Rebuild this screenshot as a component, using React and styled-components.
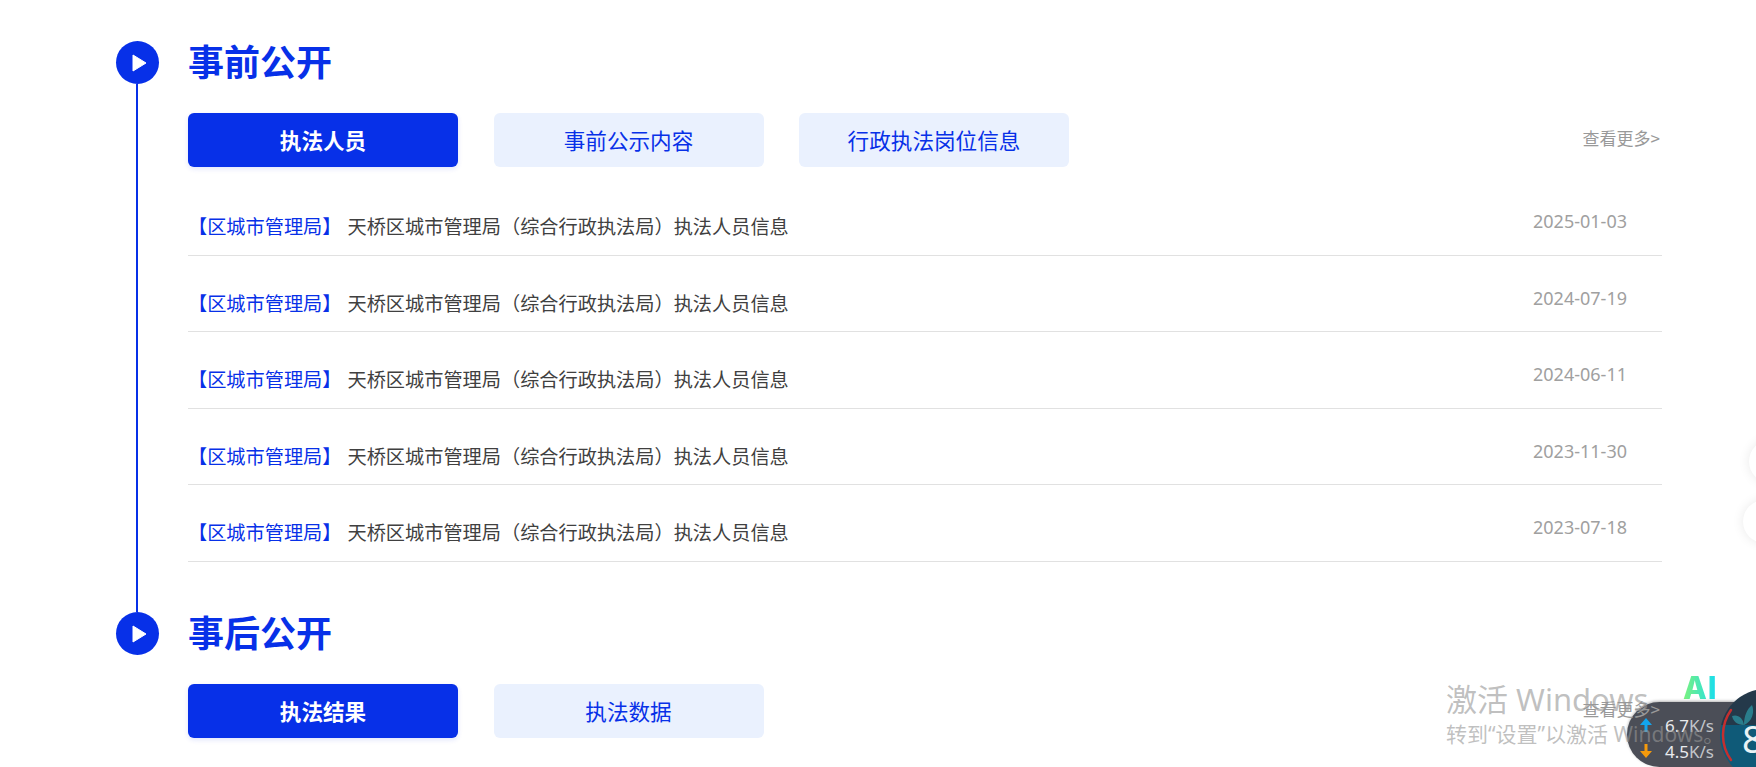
import React from 'react'
import styled, { createGlobalStyle } from 'styled-components'

const BLUE = '#0730e8'

const GlobalStyle = createGlobalStyle`
  html, body {
    margin: 0;
    padding: 0;
    height: 767px;
    overflow: hidden;
    background: #fff;
    font-family: "Noto Sans CJK SC", "Noto Sans", sans-serif;
  }
`

const Page = styled.div`
  position: relative;
  height: 767px;
  box-sizing: border-box;
  overflow: hidden;
  padding: 41px 94px 0 116px;
`

const Section = styled.section`
  display: flex;
  gap: 29px;
  height: 571px;
  &:last-of-type {
    height: auto;
  }
  &:last-of-type .rail-line {
    display: none;
  }
`

const Rail = styled.div`
  flex: 0 0 43px;
  display: flex;
  flex-direction: column;
`

const Dot = styled.div`
  width: 43px;
  height: 43px;
  flex: none;
  border-radius: 50%;
  background: ${BLUE};
  display: flex;
  align-items: center;
  justify-content: center;
  svg {
    margin-left: 3px;
  }
`

const RailLine = styled.div`
  flex: 1;
  width: 2px;
  margin-left: 20px;
  background: ${BLUE};
`

const Body = styled.div`
  flex: 1;
  min-width: 0;
`

const Title = styled.h2`
  margin: 0;
  height: 43px;
  line-height: 38px;
  font-size: 36px;
  font-weight: 700;
  color: ${BLUE};
`

const TabBar = styled.div`
  display: flex;
  align-items: center;
  gap: 35.5px;
  margin-top: 29px;
`

const Tab = styled.div`
  width: 270px;
  height: 54px;
  line-height: 54px;
  text-align: center;
  border-radius: 6px;
  font-size: 21.6px;
  font-weight: ${p => (p.$active ? 700 : 400)};
  color: ${p => (p.$active ? '#fff' : BLUE)};
  background: ${p => (p.$active ? BLUE : '#eaf1fe')};
  box-shadow: ${p => (p.$active ? '0 2px 5px rgba(7, 48, 232, 0.12)' : 'none')};
`

const More = styled.div`
  position: relative;
  z-index: 2;
  margin-left: auto;
  margin-right: 2px;
  margin-top: -6px;
  font-size: 17px;
  color: #999;
`

const List = styled.div`
  margin-top: 12.3px;
`

const Row = styled.div`
  height: 76.5px;
  box-sizing: border-box;
  display: flex;
  align-items: flex-end;
  padding: 0 35px 14.6px 0;
  border-bottom: 1px solid #e1e1e1;
`

const RowText = styled.div`
  flex: 1;
  line-height: 28px;
  font-size: 19.2px;
  color: #404040;
`

const Tag = styled.span`
  color: ${BLUE};
  margin-right: 6px;
`

const RowDate = styled.div`
  line-height: 28px;
  margin-bottom: 5px;
  font-family: "Noto Sans", sans-serif;
  font-size: 18px;
  color: #a0a0a0;
`

const SideButton = styled.div`
  position: absolute;
  top: ${p => p.$top}px;
  left: ${p => p.$left}px;
  width: 43px;
  height: 43px;
  border-radius: 50%;
  background: #fff;
  box-shadow: 0 0 12px rgba(0, 0, 0, 0.09);
`

const Watermark = styled.div`
  position: absolute;
  z-index: 3;
  left: 1446px;
  top: 679px;
  color: rgba(150, 150, 150, 0.6);
  white-space: nowrap;
  font-family: "Noto Sans", "Noto Sans CJK SC", sans-serif;
`

const WatermarkTitle = styled.div`
  font-size: 31px;
  line-height: 40px;
`

const WatermarkHint = styled.div`
  font-size: 21px;
  line-height: 30px;
`

const AiBadge = styled.div`
  position: absolute;
  left: 1683px;
  top: 668px;
  font-family: Inter, "Liberation Sans", sans-serif;
  font-size: 31px;
  font-weight: 800;
  line-height: 40px;
  letter-spacing: 1px;
  background: linear-gradient(90deg, #7cf27c, #12dcf5);
  -webkit-background-clip: text;
  background-clip: text;
  color: transparent;
`

const SpeedPill = styled.div`
  position: absolute;
  left: 1627px;
  top: 702px;
  width: 129px;
  height: 65px;
  padding-top: 10px;
  box-sizing: border-box;
  border-radius: 33px 0 0 33px;
  background: #4b4e57;
  box-shadow: 0 -1px 3px rgba(0, 0, 0, 0.3);
`

const SpeedRow = styled.div`
  display: flex;
  align-items: center;
  gap: 13px;
  height: 26px;
  padding-left: 13px;
  font-family: "Noto Sans", sans-serif;
  font-size: 17px;
  color: #e8eaed;
  span {
    color: #c2c5ca;
  }
`

const Ball = styled.div`
  position: absolute;
  left: 1720px;
  top: 689px;
  width: 92px;
  height: 92px;
  border-radius: 50%;
  overflow: hidden;
  background: linear-gradient(#24394a 0, #24394a 39%, #0f5a78 39%, #0f5a78 100%);
  svg {
    position: absolute;
    left: 0;
    top: 0;
  }
`

const BallValue = styled.div`
  position: absolute;
  left: 22px;
  top: 23px;
  font-family: "Noto Sans", sans-serif;
  font-size: 38px;
  line-height: 52px;
  color: #e9f2f5;
`

const Play = () => (
  <svg width="15" height="18" viewBox="0 0 15 18">
    <path d="M1 1 L14 9 L1 17 Z" fill="#fff" stroke="#fff" strokeWidth="1" strokeLinejoin="round" />
  </svg>
)

const Arrow = ({ up }) => (
  <svg width="12" height="14" viewBox="0 0 12 14">
    <path
      d={up ? 'M6 0 L12 7 H7.5 V14 H4.5 V7 H0 Z' : 'M6 14 L12 7 H7.5 V0 H4.5 V7 H0 Z'}
      fill={up ? '#12a5ee' : '#f49a0c'}
    />
  </svg>
)

const rows = ['2025-01-03', '2024-07-19', '2024-06-11', '2023-11-30', '2023-07-18']

const App = () => (
  <Page>
    <GlobalStyle />
    <Section>
      <Rail>
        <Dot><Play /></Dot>
        <RailLine className="rail-line" />
      </Rail>
      <Body>
        <Title>事前公开</Title>
        <TabBar>
          <Tab $active>执法人员</Tab>
          <Tab>事前公示内容</Tab>
          <Tab>行政执法岗位信息</Tab>
          <More>查看更多&gt;</More>
        </TabBar>
        <List>
          {rows.map(date => (
            <Row key={date}>
              <RowText>
                <Tag>【区城市管理局】</Tag>
                天桥区城市管理局（综合行政执法局）执法人员信息
              </RowText>
              <RowDate>{date}</RowDate>
            </Row>
          ))}
        </List>
      </Body>
    </Section>
    <Section>
      <Rail>
        <Dot><Play /></Dot>
        <RailLine className="rail-line" />
      </Rail>
      <Body>
        <Title>事后公开</Title>
        <TabBar>
          <Tab $active>执法结果</Tab>
          <Tab>执法数据</Tab>
          <More>查看更多&gt;</More>
        </TabBar>
      </Body>
    </Section>

    <SideButton $top={440} $left={1749} />
    <SideButton $top={500} $left={1743} />

    <AiBadge>AI</AiBadge>
    <SpeedPill>
      <SpeedRow><Arrow up /><div>6.7<span>K/s</span></div></SpeedRow>
      <SpeedRow><Arrow /><div>4.5<span>K/s</span></div></SpeedRow>
    </SpeedPill>
    <Ball>
      <svg width="92" height="92" viewBox="0 0 92 92">
        <path d="M24 36 C17 36 13 32 12 27 C18 25 23 29 24 36 Z M24 36 C24 27 27 20 32 16 C35 23 32 33 24 36 Z" fill="#2a7d8c" />
        <path d="M11 21 A43 43 0 0 0 11 71" fill="none" stroke="#c42f2f" strokeWidth="2.5" strokeLinecap="round" />
      </svg>
      <BallValue>8</BallValue>
    </Ball>
    <Watermark>
      <WatermarkTitle>激活 Windows</WatermarkTitle>
      <WatermarkHint>转到“设置”以激活 Windows。</WatermarkHint>
    </Watermark>
  </Page>
)

export default App
